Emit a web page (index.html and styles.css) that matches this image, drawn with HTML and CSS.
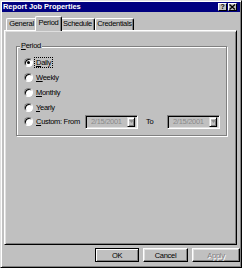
FILE: index.html
```html
<!DOCTYPE html>
<html lang="en">
<head>
  <meta charset="UTF-8" />
  <title>Report Job Properties</title>
  <link rel="stylesheet" href="styles.css">
</head>
<body>
  <div class="window">
    <div class="titlebar">
      <span class="title">Report Job Properties</span>
      <div class="title-buttons">
        <span class="tbtn help">?</span>
        <span class="tbtn">
          <svg width="7" height="6" viewBox="0 0 7 6"><path d="M0.5 0.5 L6 5.5 M6 0.5 L0.5 5.5" stroke="#000" stroke-width="1.4"/></svg>
        </span>
      </div>
    </div>

    <div class="tabs">
      <div class="tab tab-general">General</div>
      <div class="tab tab-period active">Period</div>
      <div class="tab tab-schedule">Schedule</div>
      <div class="tab tab-credentials">Credentials</div>
    </div>

    <div class="panel">
      <fieldset class="group">
        <legend><u>P</u>eriod</legend>
        <div class="options">
          <div class="option">
            <span class="radio checked"></span>
            <span class="label focus"><u>D</u>aily</span>
          </div>
          <div class="option">
            <span class="radio"></span>
            <span class="label"><u>W</u>eekly</span>
          </div>
          <div class="option">
            <span class="radio"></span>
            <span class="label"><u>M</u>onthly</span>
          </div>
          <div class="option">
            <span class="radio"></span>
            <span class="label"><u>Y</u>early</span>
          </div>
          <div class="option custom">
            <span class="radio"></span>
            <span class="label custom-label"><u>C</u>ustom: From</span>
            <div class="combo">
              <span class="combo-text">2/15/2001</span>
              <span class="drop"><svg width="5" height="3" viewBox="0 0 5 3"><path d="M0 0 H5 L2.5 3 Z" fill="#909090"/></svg></span>
            </div>
            <span class="to">To</span>
            <div class="combo">
              <span class="combo-text">2/15/2001</span>
              <span class="drop"><svg width="5" height="3" viewBox="0 0 5 3"><path d="M0 0 H5 L2.5 3 Z" fill="#909090"/></svg></span>
            </div>
          </div>
        </div>
      </fieldset>
    </div>

    <div class="footer">
      <button class="btn btn-ok default">OK</button>
      <button class="btn btn-cancel">Cancel</button>
      <button class="btn btn-apply" disabled>Apply</button>
    </div>
  </div>
</body>
</html>
```

FILE: styles.css
```css
body {
  margin: 0;
  background: #c0c0c0;
  font-family: "Liberation Sans", Arial, sans-serif;
  font-size: 7.5px;
  letter-spacing: -0.3px;
  color: #000;
}

.window {
  box-sizing: border-box;
  width: 242px;
  height: 268px;
  padding: 1px;
  border: 1px solid;
  border-color: #dfdfdf #000 #000 #dfdfdf;
  box-shadow: inset 1px 1px 0 #fff, inset -1px -1px 0 #808080;
  background: #c0c0c0;
  display: flex;
  flex-direction: column;
}

/* title bar */
.titlebar {
  height: 10px;
  background: #000080;
  display: flex;
  align-items: center;
  justify-content: space-between;
  padding: 0 3px 0 1px;
}

.title {
  color: #fff;
  font-weight: bold;
  font-size: 7.5px;
  letter-spacing: -0.05px;
  line-height: 10px;
  white-space: nowrap;
}

.title-buttons {
  display: flex;
  gap: 1px;
}

.tbtn {
  box-sizing: border-box;
  width: 9px;
  height: 8px;
  background: #c0c0c0;
  border: 1px solid;
  border-color: #fff #000 #000 #fff;
  display: flex;
  align-items: center;
  justify-content: center;
  font-size: 7px;
  font-weight: bold;
  line-height: 6px;
}

/* tabs */
.tabs {
  height: 14px;
  margin-top: 4px;
  padding-left: 4px;
  display: flex;
  align-items: flex-end;
}

.tab {
  box-sizing: border-box;
  height: 12px;
  line-height: 10px;
  text-align: center;
  white-space: nowrap;
  background: #c0c0c0;
  border: 1px solid;
  border-bottom: none;
  border-color: #fff #000 #000 #fff;
  border-radius: 2px 2px 0 0;
  box-shadow: inset -1px 0 0 #808080;
}

.tab-general { width: 31px; }
.tab-schedule { width: 35px; }
.tab-credentials { width: 39px; }

.tab.active {
  width: 27px;
  height: 15px;
  line-height: 11px;
  margin: 0 -2px -1px -2px;
  position: relative;
  z-index: 1;
}

/* panel */
.panel {
  box-sizing: border-box;
  width: 233px;
  height: 215px;
  margin-left: 2px;
  border: 1px solid;
  border-color: #fff #000 #000 #fff;
  box-shadow: inset 1px 1px 0 #dfdfdf, inset -1px -1px 0 #808080;
  padding: 10px 0 0 11px;
}

.group {
  box-sizing: border-box;
  width: 211px;
  height: 95px;
  margin: 0;
  padding: 0;
  border: 1px solid #808080;
  box-shadow: inset 1px 1px 0 #fff, 1px 1px 0 #fff;
}

.group legend {
  margin-left: 3px;
  padding: 0 1px;
  line-height: 10px;
  background: #c0c0c0;
}

.options {
  padding: 4px 0 0 7px;
}

.option {
  height: 15px;
  display: flex;
  align-items: center;
}

.option.custom {
  margin-top: -1px;
}

.radio {
  flex: none;
  box-sizing: border-box;
  width: 9px;
  height: 9px;
  border-radius: 50%;
  border: 1px solid;
  border-color: #808080 #fff #fff #808080;
  background: #fff;
  box-shadow: inset 1px 1px 0 #000;
  display: flex;
  align-items: center;
  justify-content: center;
}

.radio.checked::after {
  content: "";
  width: 3px;
  height: 3px;
  border-radius: 50%;
  background: #000;
}

.label {
  margin-left: 1px;
  padding: 0 1px;
  line-height: 9px;
  white-space: nowrap;
  border: 1px dotted transparent;
}

.label.focus {
  border-color: #000;
}

.custom-label {
  flex: none;
  box-sizing: border-box;
  width: 51px;
}

.combo {
  flex: none;
  box-sizing: border-box;
  width: 53px;
  height: 14px;
  border: 1px solid;
  border-color: #808080 #fff #fff #808080;
  box-shadow: inset 1px 1px 0 #000, inset -1px -1px 0 #dfdfdf;
  background: #c0c0c0;
  display: flex;
  align-items: center;
  justify-content: space-between;
  padding: 0 2px 0 5px;
}

.combo-text {
  color: #8a8a8a;
  white-space: nowrap;
}

.drop {
  box-sizing: border-box;
  width: 8px;
  height: 10px;
  border: 1px solid;
  border-color: #dfdfdf #000 #000 #dfdfdf;
  box-shadow: inset 1px 1px 0 #fff, inset -1px -1px 0 #808080;
  display: flex;
  align-items: center;
  justify-content: center;
}

.to {
  flex: none;
  width: 21px;
  margin-left: 8px;
}

/* buttons */
.footer {
  display: flex;
  padding: 3px 0 0 93px;
  gap: 4px;
}

.btn {
  box-sizing: border-box;
  height: 14px;
  padding: 0;
  font: inherit;
  letter-spacing: inherit;
  color: #000;
  background: #c0c0c0;
  border: 1px solid;
  border-color: #fff #000 #000 #fff;
  box-shadow: inset -1px -1px 0 #808080, inset 1px 1px 0 #dfdfdf;
}

.btn.default {
  border-color: #000;
  box-shadow: inset 1px 1px 0 #fff, inset -1px -1px 0 #808080;
}

.btn-ok { width: 44px; }
.btn-cancel { width: 45px; }
.btn-apply { width: 48px; }

.btn:disabled {
  color: #808080;
  text-shadow: 1px 1px 0 #fff;
}
```
